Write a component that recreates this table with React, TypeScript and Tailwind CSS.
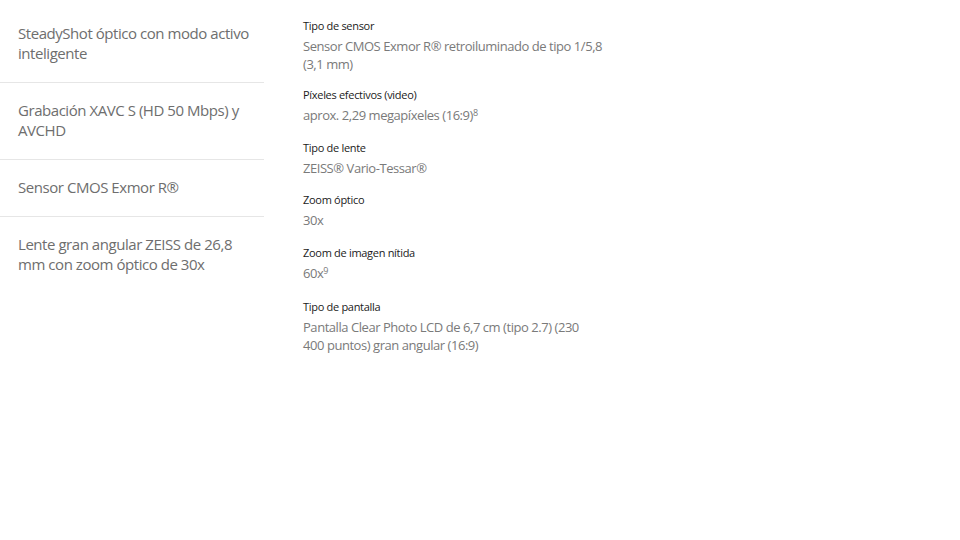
import React from "react";

const features = [
  "SteadyShot óptico con modo activo inteligente",
  "Grabación XAVC S (HD 50 Mbps) y AVCHD",
  "Sensor CMOS Exmor R®",
  "Lente gran angular ZEISS de 26,8 mm con zoom óptico de 30x",
];

const specs: { label: string; value: React.ReactNode; gap?: string }[] = [
  {
    label: "Tipo de sensor",
    value: "Sensor CMOS Exmor R® retroiluminado de tipo 1/5,8 (3,1 mm)",
    gap: "mb-[14px]",
  },
  {
    label: "Píxeles efectivos (video)",
    value: (
      <>
        aprox. 2,29 megapíxeles (16:9)<sup className="text-[9px]">8</sup>
      </>
    ),
    gap: "mb-[16px]",
  },
  { label: "Tipo de lente", value: "ZEISS® Vario-Tessar®" },
  { label: "Zoom óptico", value: "30x", gap: "mb-[16px]" },
  {
    label: "Zoom de imagen nítida",
    value: (
      <>
        60x<sup className="text-[9px]">9</sup>
      </>
    ),
    gap: "mb-[17px]",
  },
  {
    label: "Tipo de pantalla",
    value: (
      <>
        Pantalla Clear Photo LCD de 6,7 cm (tipo 2.7) (230
        <br />
        400 puntos) gran angular (16:9)
      </>
    ),
  },
];

export default function App() {
  return (
    <div
      className="w-[960px] h-[540px] bg-white flex overflow-hidden"
      style={{ fontFamily: '"Open Sans", "Noto Sans", sans-serif' }}
    >
      {/* feature highlights */}
      <ul className="w-[264px] shrink-0 pt-[6px]">
        {features.map((f, i) => (
          <li
            key={f}
            className={
              "pl-[18px] pr-[8px] pt-[17px] pb-[19px] text-[15px] leading-[20px] tracking-[-0.45px] text-[#6e6e6e] " +
              (i < features.length - 1 ? "border-b border-[#e6e6e6]" : "")
            }
          >
            {f}
          </li>
        ))}
      </ul>

      {/* spec list */}
      <dl className="ml-[39px] w-[305px] pt-[18px]">
        {specs.map((s) => (
          <div key={s.label} className={s.gap ?? "mb-[15px]"}>
            <dt className="text-[11px] leading-[16px] tracking-[-0.3px] text-[#1a1a1a]">{s.label}</dt>
            <dd className="mt-[3px] text-[13px] leading-[18px] tracking-[-0.45px] text-[#7a7a7a]">{s.value}</dd>
          </div>
        ))}
      </dl>
    </div>
  );
}
